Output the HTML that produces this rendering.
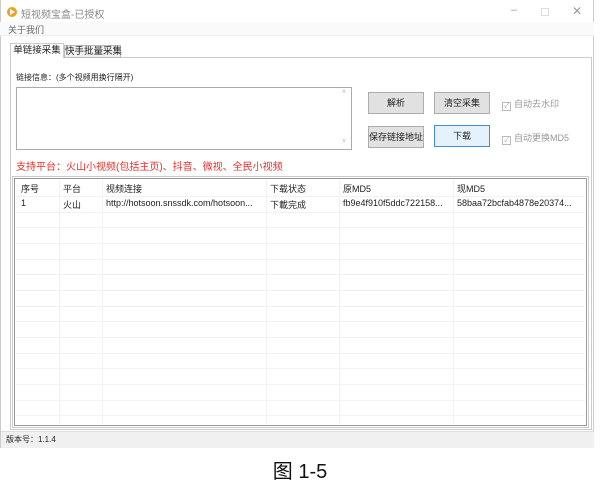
<!DOCTYPE html>
<html><head><meta charset="utf-8"><style>
*{margin:0;padding:0;box-sizing:border-box}
body{width:600px;height:483px;background:#fff;position:relative;overflow:hidden;font-family:"Liberation Sans","Noto Sans CJK SC",sans-serif;font-size:9px;color:#222}
.a{position:absolute;white-space:nowrap}
.btn{position:absolute;background:#e1e1e1;border:1px solid #adadad;text-align:center;line-height:20px;font-size:9px}
.cb{position:absolute;color:#999;font-size:9px}
.cb span{display:inline-block;width:9px;height:9px;border:1px solid #bbb;margin-right:3px;vertical-align:-1px;font-size:7px;line-height:7px;text-align:center;color:#aaa}
.vl{position:absolute;top:1px;bottom:1px;width:1px;background:#f0f2f4}
.hl{position:absolute;left:1px;right:1px;height:1px;background:#f0f2f4}
</style></head><body>
<div class="a" style="left:0;top:0;width:594px;height:448px;border:1px solid #ccc;border-top:none;background:#fff"></div>
<div class="a" style="left:7px;top:7px;width:10px;height:10px;border-radius:50%;background:#f0a020"></div>
<div class="a" style="left:10px;top:9px;width:0;height:0;border-left:5px solid #fff;border-top:3px solid transparent;border-bottom:3px solid transparent"></div>
<div class="a" style="left:21px;top:6px;color:#888;font-size:10px">短视频宝盒-已授权</div>
<div class="a" style="left:511px;top:4px;color:#999;font-size:11px">–</div>
<div class="a" style="left:541px;top:8px;width:8px;height:8px;border:1px solid #ddd"></div>
<div class="a" style="left:572px;top:4px;color:#999;font-size:12px">✕</div>
<div class="a" style="left:0;top:22px;width:594px;height:14px;background:#fafafa;border-bottom:1px solid #eee"></div>
<div class="a" style="left:8px;top:23px;color:#666;font-size:9px">关于我们</div>
<div class="a" style="left:10px;top:57px;width:582px;height:373px;border:1px solid #ccc"></div>
<div class="a" style="left:10px;top:43px;width:54px;height:15px;border:1px solid #ccc;border-bottom:none;background:#fff;text-align:center;font-size:9.5px;line-height:14px">单链接采集</div>
<div class="a" style="left:64px;top:45px;width:57px;height:13px;border:1px solid #bbb;background:#f0f0f0;text-align:center;font-size:9.5px;line-height:12px">快手批量采集</div>
<div class="a" style="left:16px;top:72px;font-size:8px">链接信息：(多个视频用换行隔开)</div>
<div class="a" style="left:16px;top:87px;width:336px;height:63px;border:1px solid #aaa"></div>
<div class="a" style="left:342px;top:89px;color:#aaa;font-size:7px">˄</div>
<div class="a" style="left:342px;top:138px;color:#aaa;font-size:7px">˅</div>
<div class="btn" style="left:368px;top:92px;width:56px;height:22px">解析</div>
<div class="btn" style="left:434px;top:92px;width:56px;height:22px">清空采集</div>
<div class="btn" style="left:368px;top:126px;width:56px;height:22px">保存链接地址</div>
<div class="btn" style="left:434px;top:125px;width:56px;height:22px;background:#e5f1fb;border-color:#3c8fd6">下载</div>
<div class="cb" style="left:502px;top:97px"><span>✓</span>自动去水印</div>
<div class="cb" style="left:502px;top:131px"><span>✓</span>自动更换MD5</div>
<div class="a" style="left:16px;top:158px;color:#e8302a;font-size:10px">支持平台：火山小视频(包括主页)、抖音、微视、全民小视频</div>
<div class="a" style="left:14px;top:178px;width:573px;height:248px;border:1px solid #999;outline:1px solid #ccc;outline-offset:1px">
<div class="vl" style="left:44px"></div><div class="vl" style="left:87px"></div><div class="vl" style="left:251px"></div><div class="vl" style="left:324px"></div><div class="vl" style="left:438px"></div>
<div class="hl" style="top:17px"></div><div class="hl" style="top:33px"></div><div class="hl" style="top:48px"></div><div class="hl" style="top:64px"></div><div class="hl" style="top:80px"></div><div class="hl" style="top:95px"></div><div class="hl" style="top:111px"></div><div class="hl" style="top:127px"></div><div class="hl" style="top:142px"></div><div class="hl" style="top:158px"></div><div class="hl" style="top:174px"></div><div class="hl" style="top:189px"></div><div class="hl" style="top:205px"></div><div class="hl" style="top:221px"></div><div class="hl" style="top:236px"></div>
<div class="a" style="left:6px;top:3px">序号</div><div class="a" style="left:48px;top:3px">平台</div><div class="a" style="left:91px;top:3px">视频连接</div><div class="a" style="left:255px;top:3px">下载状态</div><div class="a" style="left:328px;top:3px">原MD5</div><div class="a" style="left:442px;top:3px">现MD5</div>
<div class="a" style="left:6px;top:19px">1</div><div class="a" style="left:48px;top:19px">火山</div><div class="a" style="left:91px;top:19px">http://hotsoon.snssdk.com/hotsoon...</div><div class="a" style="left:255px;top:19px">下載完成</div><div class="a" style="left:328px;top:19px">fb9e4f910f5ddc722158...</div><div class="a" style="left:442px;top:19px">58baa72bcfab4878e20374...</div>
</div>
<div class="a" style="left:1px;top:431px;width:593px;height:17px;background:#f0f0f0;border-top:1px solid #ddd"></div>
<div class="a" style="left:6px;top:434px;font-size:8px">版本号：1.1.4</div>
<div class="a" style="left:0;top:455px;width:600px;text-align:center;font-size:20px;color:#111">图 1-5</div>
</body></html>
